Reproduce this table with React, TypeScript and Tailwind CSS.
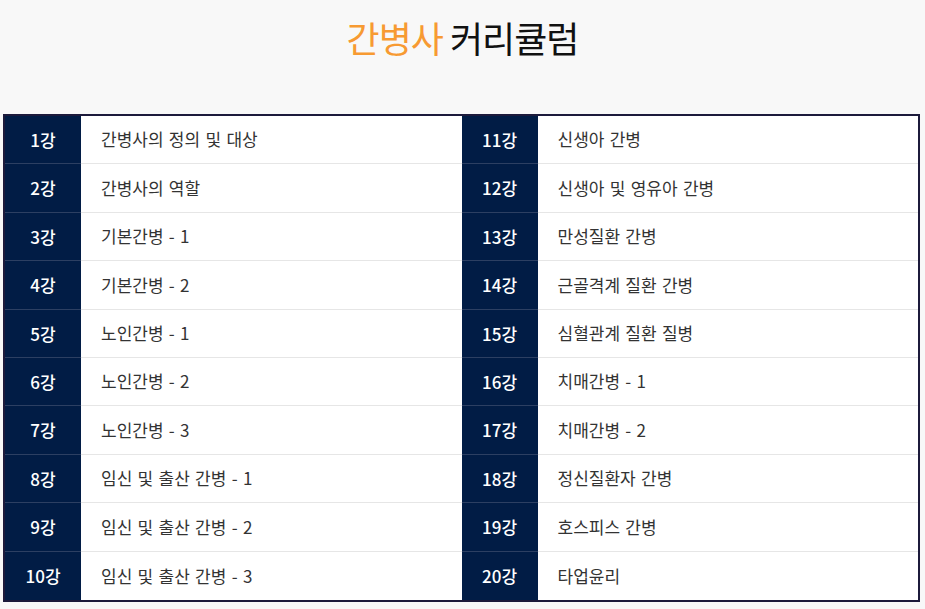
const lessons = [
  "간병사의 정의 및 대상",
  "간병사의 역할",
  "기본간병 - 1",
  "기본간병 - 2",
  "노인간병 - 1",
  "노인간병 - 2",
  "노인간병 - 3",
  "임신 및 출산 간병 - 1",
  "임신 및 출산 간병 - 2",
  "임신 및 출산 간병 - 3",
  "신생아 간병",
  "신생아 및 영유아 간병",
  "만성질환 간병",
  "근골격계 질환 간병",
  "심혈관계 질환 질병",
  "치매간병 - 1",
  "치매간병 - 2",
  "정신질환자 간병",
  "호스피스 간병",
  "타업윤리",
];

const Cell = ({ no, title, last }: { no: number; title: string; last: boolean }) => (
  <div className="flex flex-1 h-full">
    <div
      className={`w-[76px] shrink-0 flex items-center justify-center bg-[#011c45] text-white text-[17px] font-medium ${
        last ? "" : "border-b border-[#2c3f62]"
      }`}
    >
      {no}강
    </div>
    <div
      className={`flex-1 flex items-center pl-5 pb-px bg-white text-[#333] text-[17px] [word-spacing:1.5px] ${
        last ? "" : "border-b border-[#e6e6e6]"
      }`}
    >
      {title}
    </div>
  </div>
);

export default function App() {
  return (
    <div
      className="w-[925px] h-[609px] bg-[#f8f8f8] overflow-hidden"
      style={{ fontFamily: '"Noto Sans CJK KR", "Noto Sans", sans-serif' }}
    >
      <div className="h-[114px] flex justify-center pt-[10px]">
        <h1 className="text-[36px] leading-[54px] tracking-[-1px]">
          <span className="text-[#f79a32]">간병사</span>{" "}
          <span className="text-[#111]">커리큘럼</span>
        </h1>
      </div>
      <div className="ml-[3px] w-[917px] h-[488px] border-2 border-[#1c1a3b] flex flex-col">
        {Array.from({ length: 10 }).map((_, i) => (
          <div key={i} className="flex flex-1">
            <Cell no={i + 1} title={lessons[i]} last={i === 9} />
            <Cell no={i + 11} title={lessons[i + 10]} last={i === 9} />
          </div>
        ))}
      </div>
    </div>
  );
}
